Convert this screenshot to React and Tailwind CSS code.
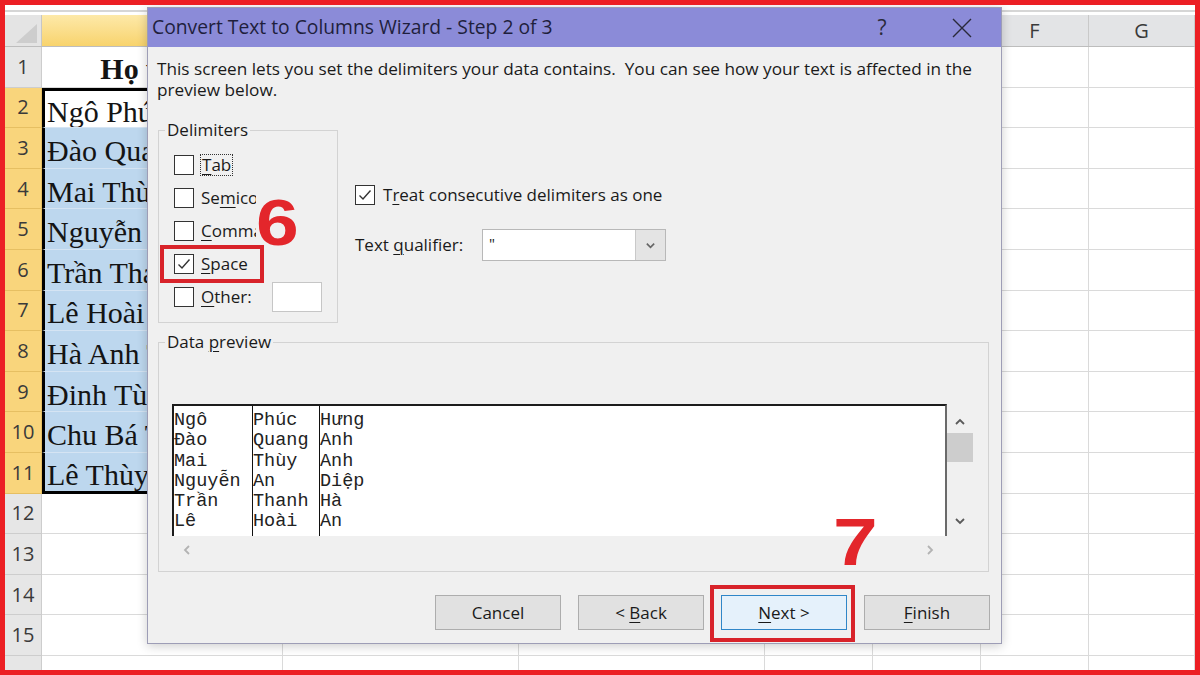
import React from 'react';

const colW = ['w-[241px]', 'w-[236px]', 'w-[246px]', 'w-[108px]', 'w-[108px]', 'w-[108px]', 'w-[106px]'];
const colNames = ['A', 'B', 'C', 'D', 'E', 'F', 'G'];
const names = [
    'Ngô Phúc Hưng', 'Đào Quang Anh', 'Mai Thùy Anh', 'Nguyễn An Diệp', 'Trần Thanh Hà',
    'Lê Hoài An', 'Hà Anh Tuấn', 'Đinh Tùng Lâm', 'Chu Bá Thông', 'Lê Thùy Linh'
];
const preview = [
    ['Ngô', 'Phúc', 'Hưng'],
    ['Đào', 'Quang', 'Anh'],
    ['Mai', 'Thùy', 'Anh'],
    ['Nguyễn', 'An', 'Diệp'],
    ['Trần', 'Thanh', 'Hà'],
    ['Lê', 'Hoài', 'An'],
];

const Check = () => (
    <svg width="14" height="12" viewBox="0 0 14 12" fill="none">
        <path d="M1.5 6.5 L5 10 L12.5 1.5" stroke="#333" strokeWidth="1.4" />
    </svg>
);

const Box = ({ checked }) => (
    <div className="w-[20px] h-[20px] border border-[#333] bg-white flex items-center justify-center shrink-0">
        {checked && <Check />}
    </div>
);

const Chevron = ({ dir, color = '#555', size = 12 }) => {
    const d = {
        up: 'M2 8 L6 4 L10 8',
        down: 'M2 4 L6 8 L10 4',
        left: 'M8 2 L4 6 L8 10',
        right: 'M4 2 L8 6 L4 10',
    }[dir];
    return (
        <svg width={size} height={size} viewBox="0 0 12 12" fill="none">
            <path d={d} stroke={color} strokeWidth="1.8" />
        </svg>
    );
};

const Sheet = () => (
    <div className="flex flex-col">
        <div className="h-[5px] bg-white" />
        <div className="h-[2px] bg-[#d6d6d6]" />
        <div className="h-[3px] bg-white" />
        {/* column headers */}
        <div className="flex h-[32px] border-b border-[#bdbdbd]">
            <div className="w-[37px] bg-[#e4e4e4] border-r border-[#c6c6c6]">
                <svg width="36" height="31" viewBox="0 0 36 31">
                    <polygon points="11,28 32,28 32,9" fill="#cdcdcd" />
                </svg>
            </div>
            {colNames.map((c, i) => (
                <div
                    key={c}
                    className={`${colW[i]} ${i === 0 ? 'bg-linear-to-b from-[#fde9a8] to-[#f8d36c] border-[#e0b64e]' : 'bg-[#e3e4e6] border-[#c9c9c9]'} border-r flex items-center justify-center text-[20px] text-[#3a3a3a]`}
                >
                    {c}
                </div>
            ))}
        </div>
        {/* rows */}
        {Array.from({ length: 16 }, (_, r) => {
            const n = r + 1;
            const sel = n >= 2 && n <= 11;
            let aCls = 'border-r border-b border-[#dadada] bg-white';
            if (sel) {
                aCls = `${n === 2 ? 'bg-white border-t-[3px]' : 'bg-[#bdd7ee]'} border-l-[3px] ${n === 11 ? 'border-b-[3px]' : 'border-b'} border-black ${n === 11 ? '' : 'border-b-[#d5e4f3]'} pl-[2px] pt-[5px]`;
            }
            return (
                <div key={n} className={`flex ${n === 16 ? 'h-[15px]' : 'h-[40.6px]'}`}>
                    <div
                        className={`w-[37px] shrink-0 flex items-center justify-center text-[20px] text-[#3a3a3a] border-r border-b ${sel ? 'bg-[#f9d57c] border-[#e6bf62]' : 'bg-[#e6e6e6] border-[#cdcdcd]'}`}
                    >
                        {n <= 15 ? n : ''}
                    </div>
                    <div className={`${colW[0]} shrink-0 overflow-hidden whitespace-nowrap flex items-center font-['Liberation_Serif',serif] text-[30px] text-[#141414] ${aCls} ${n === 1 ? 'justify-center font-bold pt-[3px]' : ''}`}>
                        {n === 1 ? 'Họ và tên' : sel ? names[n - 2] : ''}
                    </div>
                    {colW.slice(1).map((w, i) => (
                        <div key={i} className={`${w} shrink-0 border-r border-b border-[#dadada] bg-white`} />
                    ))}
                </div>
            );
        })}
    </div>
);

const Btn = ({ children, primary }) => (
    <div
        className={`w-[126px] h-[35px] flex items-center justify-center text-[17px] text-[#1a1a1a] border ${primary ? 'bg-[#e5f1fb] border-[#2f86c8]' : 'bg-[#e1e1e1] border-[#adadad]'}`}
    >
        <span className="whitespace-pre">{children}</span>
    </div>
);

const U = ({ children }) => <span className="underline underline-offset-[3px] decoration-1">{children}</span>;

const Dialog = () => (
    <div className="absolute left-[142px] top-[2px] w-[855px] h-[637px] border border-[#9d9db6] bg-[#f0f0f0] flex flex-col shadow-[0_2px_10px_rgba(0,0,0,0.2)] text-[#1a1a1a]">
        {/* title bar */}
        <div className="h-[39px] bg-[#8b8bd8] flex items-center shrink-0">
            <div className="pl-[4px] text-[19.3px] text-[#1f1f3d] whitespace-nowrap">Convert Text to Columns Wizard - Step 2 of 3</div>
            <div className="flex-1" />
            <div className="w-[40px] text-center text-[21px] text-[#2a2a3a]">?</div>
            <div className="w-[40px] ml-[40px] mr-[19px] flex items-center justify-center">
                <svg width="20" height="20" viewBox="0 0 20 20">
                    <path d="M1 1 L19 19 M19 1 L1 19" stroke="#2a2a3a" strokeWidth="1.4" />
                </svg>
            </div>
        </div>

        <div className="px-[9px] flex flex-col">
            <div className="mt-[11px] text-[17.2px] leading-[21px] whitespace-nowrap">
                This screen lets you set the delimiters your data contains.&nbsp; You can see how your text is affected in the
                <br />
                preview below.
            </div>

            <div className="flex mt-[20px]">
                <fieldset className="ml-[1px] w-[180px] h-[203px] border border-[#d3d3d3]">
                    <legend className="ml-[6px] px-[2px] text-[17px] leading-[20px]">Delimiters</legend>
                    <div className="pt-[8px] text-[17px]">
                        <div className="flex items-center h-[33px] pl-[15px]">
                            <Box />
                            <span className="ml-[6px] border border-dotted border-[#333] px-px leading-[20px]"><U>T</U>ab</span>
                        </div>
                        <div className="flex items-center h-[33px] pl-[15px]">
                            <Box />
                            <span className="ml-[7px]">Se<U>m</U>icolon</span>
                        </div>
                        <div className="flex items-center h-[33px] pl-[15px]">
                            <Box />
                            <span className="ml-[7px]"><U>C</U>omma</span>
                        </div>
                        <div className="flex items-center h-[33px] pl-[15px]">
                            <Box checked />
                            <span className="ml-[7px]"><U>S</U>pace</span>
                        </div>
                        <div className="flex items-center h-[33px] pl-[15px] pr-[15px]">
                            <Box />
                            <span className="ml-[7px]"><U>O</U>ther:</span>
                            <div className="ml-auto w-[50px] h-[30px] bg-white border border-[#c6c6c6]" />
                        </div>
                    </div>
                </fieldset>

                <div className="ml-[17px] pt-[65px] flex flex-col text-[17px]">
                    <div className="flex items-center h-[20px]">
                        <Box checked />
                        <span className="ml-[8px]">T<U>r</U>eat consecutive delimiters as one</span>
                    </div>
                    <div className="flex items-center mt-[24px]">
                        <span className="w-[127px]">Text <U>q</U>ualifier:</span>
                        <div className="w-[184px] h-[32px] bg-white border border-[#b8b8b8] flex">
                            <div className="flex-1 pl-[6px] leading-[26px] text-[15px]">"</div>
                            <div className="w-[30px] bg-[#e4e4e4] border-l border-[#c9c9c9] flex items-center justify-center">
                                <Chevron dir="down" color="#666" size={11} />
                            </div>
                        </div>
                    </div>
                </div>
            </div>

            {/* data preview */}
            <fieldset className="mt-[9px] ml-[1px] w-[831px] h-[240px] border border-[#d3d3d3]">
                <legend className="ml-[6px] px-[2px] text-[17px] leading-[20px]">Data <U>p</U>review</legend>
                <div className="mt-[52px] ml-[13px] w-[801px] flex flex-col">
                    <div className="flex h-[132px]">
                        <div className="w-[775px] bg-white border-t-2 border-l-2 border-[#1c1c1c] border-r-2 border-r-[#6a6a6a] flex font-['Liberation_Mono',monospace] text-[18.5px] leading-[20.3px] text-[#222] overflow-hidden">
                            <div className="w-[78px] pt-[5px] whitespace-pre">
                                {preview.map((p, i) => <div key={i}>{p[0]}</div>)}
                            </div>
                            <div className="w-[67px] pt-[5px] border-l border-[#111] whitespace-pre">
                                {preview.map((p, i) => <div key={i}>{p[1]}</div>)}
                            </div>
                            <div className="flex-1 pt-[5px] border-l border-[#111] whitespace-pre">
                                {preview.map((p, i) => <div key={i}>{p[2]}</div>)}
                            </div>
                        </div>
                        <div className="w-[26px] flex flex-col items-center">
                            <div className="h-[29px] flex items-end pb-[5px]">
                                <Chevron dir="up" color="#5a5a5a" />
                            </div>
                            <div className="h-[29px] w-full bg-[#cdcdcd]" />
                            <div className="flex-1" />
                            <div className="pb-[9px]">
                                <Chevron dir="down" color="#5a5a5a" />
                            </div>
                        </div>
                    </div>
                    <div className="w-[775px] h-[28px] flex items-center justify-between pl-[9px] pr-[11px]">
                        <Chevron dir="left" color="#b3b3b3" />
                        <Chevron dir="right" color="#b3b3b3" />
                    </div>
                </div>
            </fieldset>

            {/* buttons */}
            <div className="mt-[23px] flex justify-end gap-[17px] pr-[2px]">
                <Btn>Cancel</Btn>
                <Btn>&lt; <U>B</U>ack</Btn>
                <Btn primary><U>N</U>ext &gt;</Btn>
                <Btn><U>F</U>inish</Btn>
            </div>
        </div>
    </div>
);

export default function App() {
    return (
        <div className="w-[1200px] h-[675px] border-[5px] border-[#ec1f24] bg-white relative overflow-hidden font-['Open_Sans',sans-serif]">
            <Sheet />
            <Dialog />

            {/* step annotations */}
            <div className="absolute left-[251px] top-[186px] bg-[#f0f0f0] origin-left scale-x-[1.2] font-['Liberation_Sans',sans-serif] font-bold text-[64px] leading-none text-[#e3262b]">6</div>
            <div className="absolute left-[155px] top-[240px] w-[104px] h-[38px] border-4 border-[#d8232a]" />
            <div className="absolute left-[828px] top-[503px] origin-left scale-x-[1.2] font-['Liberation_Sans',sans-serif] font-bold text-[67px] leading-none text-[#e3262b]">7</div>
            <div className="absolute left-[705px] top-[580px] w-[145px] h-[57px] border-4 border-[#d8232a]" />
        </div>
    );
}
